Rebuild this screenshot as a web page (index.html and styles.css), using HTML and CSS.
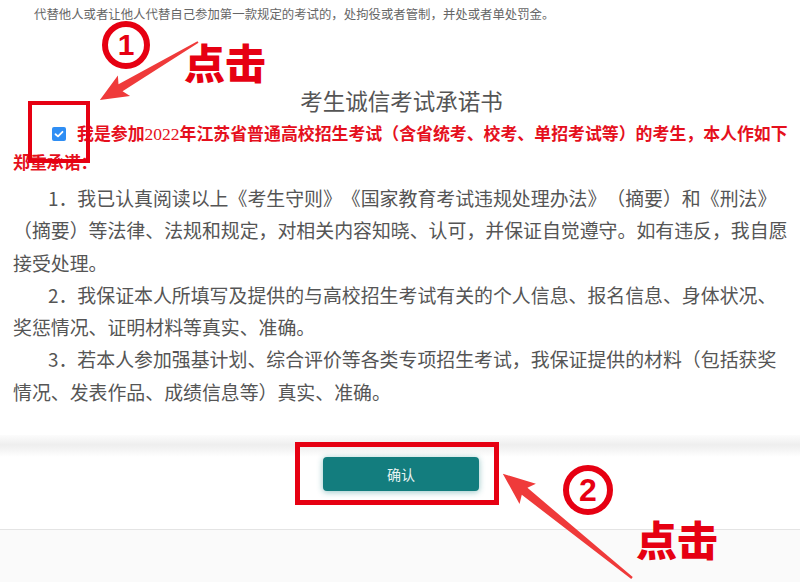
FILE: index.html
```html
<!DOCTYPE html>
<html lang="zh-CN">
<head>
<meta charset="utf-8">
<link rel="stylesheet" href="styles.css">
</head>
<body>
<div class="page">
  <p class="notice">代替他人或者让他人代替自己参加第一款规定的考试的，处拘役或者管制，并处或者单处罚金。</p>
  <h1 class="title">考生诚信考试承诺书</h1>
  <div class="pledge">
    <p class="agree"><span class="checkbox"><svg viewBox="0 0 14 14" width="14" height="14"><path d="M3.5 7.2 L6 9.4 L10.5 4.8" fill="none" stroke="#fff" stroke-width="1.8" stroke-linecap="round" stroke-linejoin="round"/></svg></span>我是参加<span class="num">2022</span>年江苏省普通高校招生考试（含省统考、校考、单招考试等）的考生，本人作如下郑重承诺：</p>
    <p class="item">1．我已认真阅读以上《考生守则》《国家教育考试违规处理办法》（摘要）和《刑法》（摘要）等法律、法规和规定，对相关内容知晓、认可，并保证自觉遵守。如有违反，我自愿接受处理。</p>
    <p class="item">2．我保证本人所填写及提供的与高校招生考试有关的个人信息、报名信息、身体状况、奖惩情况、证明材料等真实、准确。</p>
    <p class="item">3．若本人参加强基计划、综合评价等各类专项招生考试，我保证提供的材料（包括获奖情况、发表作品、成绩信息等）真实、准确。</p>
  </div>
  <div class="shade"></div>
  <div class="footer">
    <button class="confirm">确认</button>
  </div>
  <div class="bottom"></div>

  <div class="mark box1"></div>
  <div class="mark box2"></div>
  <div class="circle c1">1</div>
  <div class="circle c2">2</div>
  <div class="click k1">点击</div>
  <div class="click k2">点击</div>
  <svg class="arrows" width="800" height="582" viewBox="0 0 800 582">
    <polygon class="arrow" transform="translate(198,42) rotate(149.4)" points="0,-1 90,-4 86,-12 114,0 86,12 90,4 0,1"/>
    <polygon class="arrow" transform="translate(632,578) rotate(218.9)" points="0,-1.2 138,-4.5 134,-13 166,0 134,13 138,4.5 0,1.2"/>
  </svg>
</div>
</body>
</html>
```

FILE: styles.css
```css
html, body {
  margin: 0;
  padding: 0;
  background: #ffffff;
}
body {
  font-family: "Noto Sans CJK SC", "Noto Sans", sans-serif;
  color: #555;
  text-spacing-trim: space-all;
}
.page {
  position: relative;
  width: 800px;
  height: 582px;
  overflow: hidden;
}
.notice {
  margin: 0;
  padding: 5px 0 0 34px;
  height: 23px;
  font-size: 12.4px;
  line-height: 18px;
  color: #666;
}
.title {
  margin: 0;
  padding-top: 57px;
  text-align: center;
  font-weight: normal;
  font-size: 22.5px;
  line-height: 30px;
  color: #555;
  padding-left: 3px;
}
.pledge {
  padding: 3px 8px 0 13px;
}
.agree {
  margin: 0;
  text-indent: 39px;
  color: #e5101d;
  font-weight: bold;
  font-size: 16.9px;
  line-height: 29px;
}
.checkbox {
  display: inline-block;
  width: 14px;
  height: 14px;
  border-radius: 2px;
  background: #2f8ef4;
  margin-right: 11px;
  vertical-align: -1px;
  text-indent: 0;
}
.checkbox svg {
  display: block;
}
.num {
  font-family: "Liberation Serif", serif;
  font-weight: normal;
  font-size: 17.5px;
  line-height: 1;
}
.item {
  margin: 0;
  text-indent: 35px;
  font-size: 18.9px;
  line-height: 32.3px;
  color: #555;
}
.pledge .agree + .item {
  margin-top: 6px;
}
.shade {
  margin-top: 27px;
  height: 22px;
  background: linear-gradient(#fcfcfc, #eeeeee 45%, #f5f5f5 70%, #ffffff);
}
.footer {
  height: 73px;
  display: flex;
  justify-content: center;
  align-items: flex-start;
  padding-top: 0;
  box-sizing: border-box;
  border-bottom: 1px solid #e4e4e4;
}
.confirm {
  width: 156px;
  height: 34px;
  margin-left: 2px;
  border: none;
  border-radius: 4px;
  background: #137d7e;
  color: #e9f4f4;
  font-family: "Noto Sans CJK SC", sans-serif;
  font-size: 14px;
  box-shadow: 0 1px 6px rgba(19, 125, 126, 0.45);
}
.bottom {
  height: 60px;
  background: #fafafa;
}
.mark {
  position: absolute;
  border: 4px solid #e60012;
  box-sizing: border-box;
}
.box1 {
  left: 28px;
  top: 101px;
  width: 62px;
  height: 62px;
}
.box2 {
  left: 295px;
  top: 442px;
  width: 204px;
  height: 63px;
  border-width: 5px;
}
.circle {
  position: absolute;
  box-sizing: border-box;
  border: 6px solid #e60012;
  border-radius: 50%;
  color: #e60012;
  font-family: "Liberation Sans", sans-serif;
  font-weight: bold;
  text-align: center;
}
.c1 {
  left: 102px;
  top: 21px;
  width: 48px;
  height: 48px;
  font-size: 30px;
  line-height: 36px;
}
.c2 {
  left: 563px;
  top: 465px;
  width: 50px;
  height: 50px;
  font-size: 32px;
  line-height: 38px;
}
.click {
  position: absolute;
  color: #e60012;
  font-weight: 900;
  font-family: "Noto Sans CJK SC", sans-serif;
  white-space: nowrap;
}
.k1 {
  left: 184px;
  top: 33px;
  font-size: 41px;
  line-height: 56px;
}
.k2 {
  left: 636px;
  top: 510px;
  font-size: 41px;
  line-height: 56px;
}
.arrows {
  position: absolute;
  left: 0;
  top: 0;
  pointer-events: none;
}
.arrow {
  fill: #ef3a3a;
}
```
